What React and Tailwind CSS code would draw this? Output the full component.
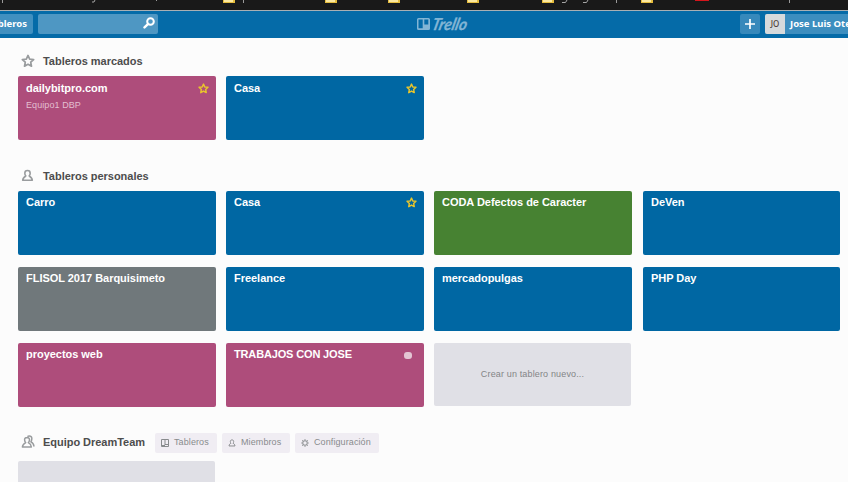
import React from "react";

const STAR = "M8 1.6 L9.9 5.8 L14.5 6.3 L11.1 9.4 L12 14 L8 11.7 L4 14 L4.9 9.4 L1.5 6.3 L6.1 5.8 Z";

function Star({ className, width = 1.9 }) {
  return (
    <svg viewBox="0 0 16 16" className={className} fill="none" stroke="currentColor" strokeWidth={width} strokeLinejoin="round">
      <path d={STAR} />
    </svg>
  );
}

function Person({ className }) {
  return (
    <svg viewBox="0 0 14 14" className={className} fill="none" stroke="currentColor" strokeWidth="1.7" strokeLinejoin="round">
      <path d="M7 1.6 C4.8 1.6 4.1 2.9 4.1 4.5 C4.1 5.8 4.6 6.7 5.2 7.5 C3.2 8.6 2 9.4 1.8 12.2 H12.2 C12 9.4 10.8 8.6 8.8 7.5 C9.4 6.7 9.9 5.8 9.9 4.5 C9.9 2.9 9.2 1.6 7 1.6 Z" />
    </svg>
  );
}

function People({ className }) {
  return (
    <svg viewBox="0 0 14 14" className={className} fill="none" stroke="currentColor" strokeWidth="1.5" strokeLinejoin="round" strokeLinecap="round">
      <path d="M6 2.6 C4.1 2.6 3.5 3.8 3.6 5 C3.7 6.3 4.2 7.1 4.7 7.7 C3 8.6 1.6 9.5 1.4 12 H10.4 C10.2 9.5 9 8.6 7.3 7.7 C7.9 7.1 8.4 6.3 8.5 5 C8.6 3.8 7.9 2.6 6 2.6 Z" />
      <path d="M7 1.3 C10 0.6 11 2.1 10.8 4 C10.7 5.3 10.3 6.2 9.9 6.9 C11.6 7.7 12.7 8.6 12.9 11" />
    </svg>
  );
}

function BoardIcon({ className }) {
  return (
    <svg viewBox="0 0 8 8" className={className} fill="none" stroke="currentColor">
      <path d="M0.5 0.5H7.5V7.5H0.5ZM4 0.5V6" />
      <path d="M1 6.5H4M4 5.5H7" />
    </svg>
  );
}

function Gear({ className }) {
  return (
    <svg viewBox="0 0 10 10" className={className} fill="none" stroke="currentColor">
      <circle cx="5" cy="5" r="2.8" strokeWidth="1.2" />
      <path d="M5 .4V2M5 8V9.6M.4 5H2M8 5H9.6M1.7 1.7L2.9 2.9M7.1 7.1L8.3 8.3M8.3 1.7L7.1 2.9M2.9 7.1L1.7 8.3" strokeWidth="1.4" />
    </svg>
  );
}

function BrowserStrip() {
  return (
    <svg width="848" height="10" className="block shrink-0 bg-[#191919]">
      {[223, 325, 388, 467, 542, 641].map((x) => (
        <g key={x}>
          <rect x={x} y="0" width="12" height="3" fill="#e5bd3e" />
          <rect x={x + 1} y="0" width="9" height="2" fill="#fbe8a0" />
        </g>
      ))}
      <rect x="695" y="0" width="14" height="1" fill="#d5151c" />
      <g fill="#9a9a9a">
        {[2, 243, 616, 789].map((x) => <rect key={x} x={x} y="0" width="1" height="3" />)}
        <rect x="156" y="0" width="1" height="1" />
      </g>
      <path d="M95 0L94 2H92M562 2.5H565.5L567 0M583 2.5H586.5L588 0" fill="none" stroke="#a5a5a5" />
    </svg>
  );
}

function TopBar() {
  return (
    <header className="flex h-[28px] w-[848px] shrink-0 items-start overflow-hidden border-t border-[#a9b0b4] bg-[#056ba8] pt-[3px] font-['Noto_Sans',sans-serif] text-[9.5px] leading-[20px] font-bold text-white">
      <div className="flex h-5 w-[33px] shrink-0 justify-end rounded-r-[2px] bg-[#4190c0] pr-[6px] whitespace-nowrap">Tableros</div>
      <div className="ml-[5px] flex h-5 w-[120px] shrink-0 justify-end rounded-[2px] bg-[#4e97c3] pt-[3px] pr-[3px]">
        <svg viewBox="0 0 12 12" className="h-3 w-3" fill="none" stroke="white" strokeLinecap="round">
          <circle cx="7.5" cy="4.5" r="3.3" strokeWidth="2" />
          <path d="M4.9 7.1L1.5 10.4" strokeWidth="2.4" />
        </svg>
      </div>
      <svg viewBox="0 0 54 20" className="ml-[258px] h-5 w-[54px] shrink-0 text-[#82b5d5]">
        <path fill="currentColor" fillRule="evenodd" d="M2.5 4H12.5Q14 4 14 5.5V14.5Q14 16 12.5 16H2.5Q1 16 1 14.5V5.5Q1 4 2.5 4ZM2.5 5.5V14.3H6.7V5.5ZM8.3 5.5V10.5H12.3V5.5Z" />
        <text x="15" y="15.6" fill="currentColor" stroke="currentColor" strokeWidth="0.3" fontFamily="Lato, sans-serif" fontWeight="700" fontStyle="italic" fontSize="16.5" textLength="35" lengthAdjust="spacingAndGlyphs" transform="translate(3.8 0) skewX(-14)">Trello</text>
      </svg>
      <div className="ml-[270px] flex h-5 w-5 shrink-0 items-center justify-center rounded-[2px] bg-[#3789bb]">
        <svg viewBox="0 0 10 10" className="-mt-px h-[10px] w-[10px]" stroke="white" strokeWidth="1.7">
          <path d="M5 0V10M0 5H10" />
        </svg>
      </div>
      <div className="ml-[5px] flex h-5 w-[120px] shrink-0 overflow-hidden rounded-[2px] bg-[#3d8ebf] whitespace-nowrap">
        <span className="w-5 shrink-0 bg-[#d6dadc] text-center text-[8px] leading-[19px] font-medium text-[#4d4037]">JO</span>
        <span className="ml-[5px]">Jose Luis Otero</span>
      </div>
    </header>
  );
}

function Heading({ icon, children }) {
  return (
    <div className="flex h-5 items-center">
      <span className="flex w-[25px] justify-start pl-[3px] text-[#999c9e]">{icon}</span>
      <h3 className="text-[11px] leading-5 font-bold tracking-[-0.03px] whitespace-nowrap text-[#4d4d4d]">{children}</h3>
    </div>
  );
}

const COLORS = { blue: "bg-[#0067a3]", pink: "bg-[#ae4d7b]", green: "bg-[#478232]", gray: "bg-[#70787b]" };

function Board({ name, team, color = "blue", starred, dot, last, top = "pt-1", tracking = "tracking-[-0.03px]" }) {
  return (
    <div className={`flex h-16 justify-between rounded-[2px] pr-[7px] pl-2 text-white ${last ? "w-[197px]" : "w-[198px]"} ${top} ${COLORS[color]}`}>
      <div className="whitespace-nowrap">
        <div className={`text-[11px] leading-[14px] font-bold ${tracking}`}>{name}</div>
        {team && <div className="mt-[3px] text-[9px] leading-[14px] tracking-[0.08px] text-[#e3bfd0]">{team}</div>}
      </div>
      {starred && <Star className="mt-[2px] h-[11px] w-[11px] text-[#e8c52c]" width={2.1} />}
      {dot && <span className="mt-[5px] mr-[5px] h-[7px] w-2 rounded-[3px] bg-[#e3c5d3]" />}
    </div>
  );
}

function Chip({ icon, className, children }) {
  return (
    <span className={`flex h-5 items-center gap-[5px] rounded-[2px] bg-[#f0edf3] pl-[6px] text-[9px] tracking-[0.1px] whitespace-nowrap text-[#888b8d] ${className}`}>
      {icon}
      {children}
    </span>
  );
}

const GRID = "grid grid-cols-[198px_198px_199px_197px] gap-x-[10px] gap-y-3";

export default function App() {
  return (
    <div className="flex h-[482px] w-[848px] flex-col overflow-hidden bg-[#fcfcfc] font-['Liberation_Sans',Arial,sans-serif]">
      <BrowserStrip />
      <TopBar />
      <main className="pt-[13px] pl-[18px]">
        <Heading icon={<Star className="-mt-px h-[14px] w-[14px]" />}>Tableros marcados</Heading>
        <div className={`mt-[5px] ${GRID}`}>
          <Board name="dailybitpro.com" team="Equipo1 DBP" color="pink" starred top="pt-[5px]" />
          <Board name="Casa" starred top="pt-[5px]" />
        </div>
        <div className="mt-[26px]">
          <Heading icon={<Person className="-mt-px h-[13px] w-[13px]" />}>Tableros personales</Heading>
        </div>
        <div className={`mt-[5px] ${GRID}`}>
          <Board name="Carro" />
          <Board name="Casa" starred />
          <Board name="CODA Defectos de Caracter" color="green" />
          <Board name="DeVen" last />
          <Board name="FLISOL 2017 Barquisimeto" color="gray" />
          <Board name="Freelance" />
          <Board name="mercadopulgas" />
          <Board name="PHP Day" last />
          <Board name="proyectos web" color="pink" />
          <Board name="TRABAJOS CON JOSE" color="pink" dot tracking="tracking-[-0.15px]" />
          <div className="flex h-[63px] w-[197px] items-center justify-center rounded-[2px] bg-[#e0e0e6] text-[9px] tracking-[0.15px] text-[#838587]">Crear un tablero nuevo...</div>
        </div>
        <div className="mt-[25px] flex">
          <div className="w-[137px]">
            <Heading icon={<People className="-mt-px h-[14px] w-[14px]" />}>Equipo DreamTeam</Heading>
          </div>
          <div className="flex gap-[5px] pt-px">
            <Chip className="w-[62px]" icon={<BoardIcon className="h-2 w-2" />}>Tableros</Chip>
            <Chip className="w-[68px]" icon={<Person className="h-2 w-2" />}>Miembros</Chip>
            <Chip className="w-[84px]" icon={<Gear className="h-2 w-2" />}>Configuración</Chip>
          </div>
        </div>
        <div className="mt-2 h-16 w-[197px] rounded-[2px] bg-[#e0e0e6]" />
      </main>
    </div>
  );
}
